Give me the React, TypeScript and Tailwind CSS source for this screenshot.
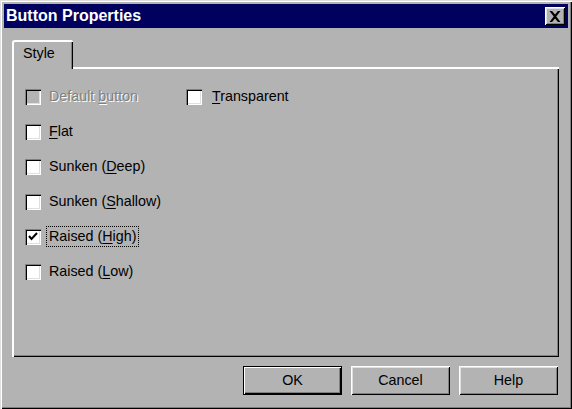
import type React from "react"

const font = "font-['Liberation_Sans',Arial,sans-serif]"

const Mn: React.FC<{ children: React.ReactNode }> = ({ children }) => (
  <span className="underline underline-offset-[2px] decoration-1">{children}</span>
)

const CheckBox: React.FC<{ checked?: boolean; disabled?: boolean }> = ({ checked, disabled }) => (
  <div
    className={`w-[16px] h-[16px] shrink-0 flex items-center justify-center shadow-[inset_1px_1px_#808080,inset_2px_2px_#000,inset_-1px_-1px_#fff,inset_-2px_-2px_#dfdfdf] ${
      disabled ? "bg-[#b3b3b3]" : "bg-white"
    }`}
  >
    {checked && (
      <svg width="16" height="16" viewBox="0 0 16 16">
        <polyline points="4,7 6.5,10 12,4" fill="none" stroke="#000" strokeWidth="2" />
      </svg>
    )}
  </div>
)

const Row: React.FC<{ checked?: boolean; disabled?: boolean; focus?: boolean; children: React.ReactNode }> = ({
  checked,
  disabled,
  focus,
  children,
}) => (
  <div className="h-[35px] flex items-center">
    <CheckBox checked={checked} disabled={disabled} />
    <span
      className={`ml-[6px] px-[2px] leading-[19px] text-[14.3px] whitespace-nowrap ${
        disabled ? "text-[#808080] [text-shadow:1px_1px_0_#fff]" : "text-black"
      } ${focus ? "outline outline-1 outline-dotted outline-black" : ""}`}
    >
      {children}
    </span>
  </div>
)

const Button: React.FC<{ label: string; isDefault?: boolean }> = ({ label, isDefault }) => (
  <button
    className={`w-[99px] h-[29px] bg-[#b3b3b3] text-[14.3px] text-black ${
      isDefault
        ? "shadow-[inset_0_0_0_1px_#000,inset_2px_2px_#fff,inset_-2px_-2px_#000,inset_-3px_-3px_#808080]"
        : "shadow-[inset_1px_1px_#fff,inset_-1px_-1px_#000,inset_2px_2px_#dfdfdf,inset_-2px_-2px_#808080]"
    }`}
  >
    {label}
  </button>
)

export default function App() {
  return (
    <div
      className={`${font} w-[572px] h-[409px] bg-[#b3b3b3] flex flex-col p-[4px] shadow-[inset_1px_1px_#dfdfdf,inset_2px_2px_#fff,inset_-1px_-1px_#000,inset_-2px_-2px_#808080]`}
    >
      <div className="h-[24px] bg-[#00005f] flex items-center justify-between pl-[2px] pr-[3px]">
        <span className="text-white font-bold text-[16px] leading-none">Button Properties</span>
        <div className="w-[20px] h-[18px] bg-[#b3b3b3] flex items-center justify-center shadow-[inset_1px_1px_#fff,inset_-1px_-1px_#000,inset_2px_2px_#dfdfdf,inset_-2px_-2px_#808080]">
          <svg width="12" height="11" viewBox="0 0 12 11">
            <path d="M0.5 0h2.6l2.9 3.6L8.9 0h2.6L7.3 5.5l4.2 5.5H8.9L6 7.4 3.1 11H0.5l4.2-5.5z" fill="#000" />
          </svg>
        </div>
      </div>

      <div className="flex flex-col pt-[12px] pl-[8px] pr-[9px]">
        <div className="relative z-10 -mb-[2px] w-[61px] h-[29px] bg-[#b3b3b3] border-t-2 border-l-2 border-white rounded-tl-[3px] rounded-tr-[2px] shadow-[inset_-1px_0_#000,inset_-2px_0_#808080] pl-[9px] pt-[1px] text-[14.3px] text-black">
          Style
        </div>
        <div className="h-[290px] border-t-2 border-l-2 border-white shadow-[inset_-1px_-1px_#000,inset_-2px_-2px_#808080] pt-[10px] pl-[11px] flex">
          <div className="w-[161px] flex flex-col">
            <Row disabled>
              Default <Mn>b</Mn>utton
            </Row>
            <Row>
              <Mn>F</Mn>lat
            </Row>
            <Row>
              Sunken (<Mn>D</Mn>eep)
            </Row>
            <Row>
              Sunken (<Mn>S</Mn>hallow)
            </Row>
            <Row checked focus>
              Raised (<Mn>H</Mn>igh)
            </Row>
            <Row>
              Raised (<Mn>L</Mn>ow)
            </Row>
          </div>
          <div className="flex flex-col">
            <Row>
              <span className="ml-[2px]">
                <Mn>T</Mn>ransparent
              </span>
            </Row>
          </div>
        </div>
        <div className="flex justify-end gap-[9px] mt-[9px] mr-[1px]">
          <Button label="OK" isDefault />
          <Button label="Cancel" />
          <Button label="Help" />
        </div>
      </div>
    </div>
  )
}
